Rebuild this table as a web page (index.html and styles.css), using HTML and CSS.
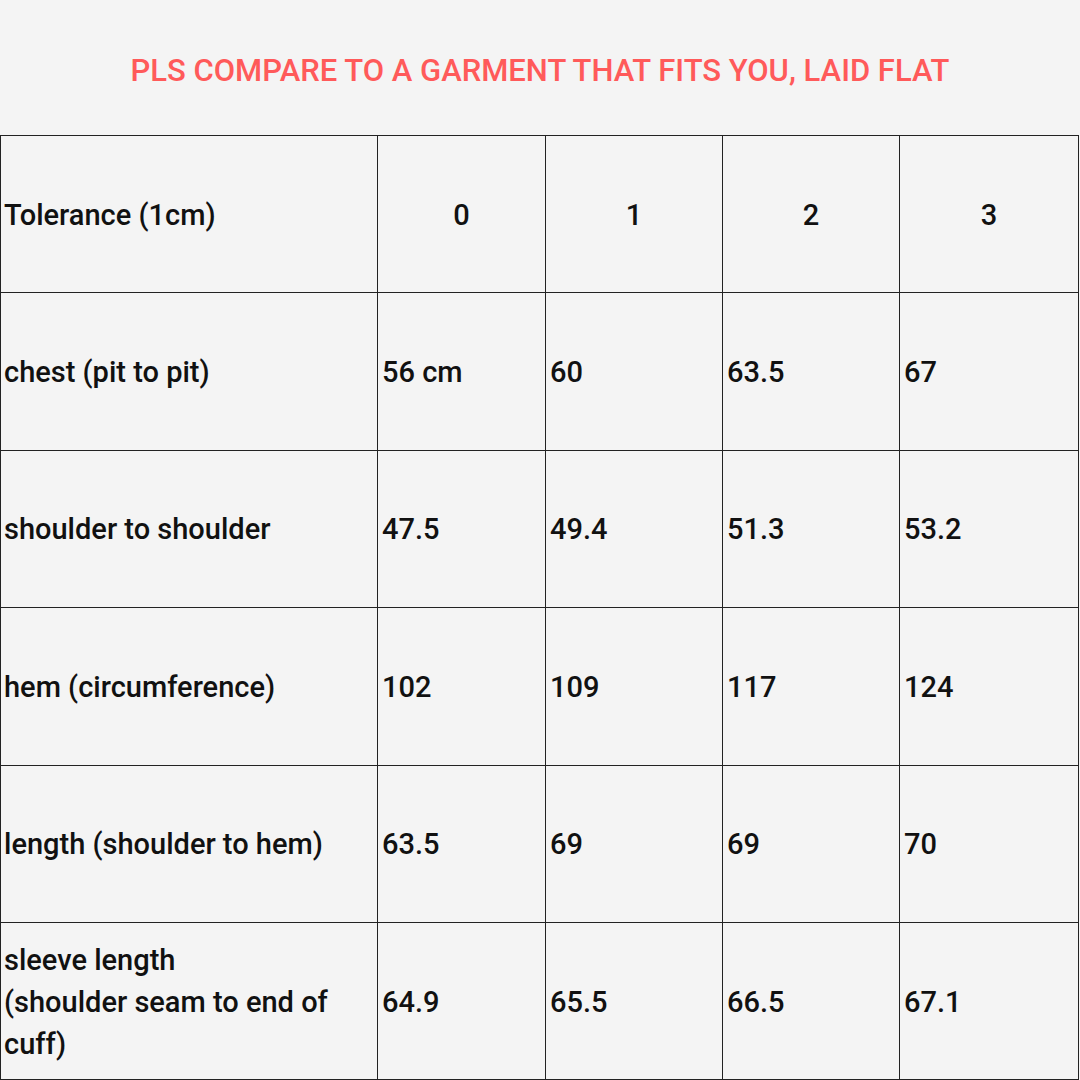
FILE: index.html
```html
<!DOCTYPE html>
<html>
<head>
<meta charset="utf-8">
<link rel="stylesheet" href="styles.css">
</head>
<body>
<div class="page">
  <h1 class="title">PLS COMPARE TO A GARMENT THAT FITS YOU, LAID FLAT</h1>
  <table class="size-table">
    <colgroup>
      <col class="c-label"><col class="c0"><col class="c1"><col class="c2"><col class="c3">
    </colgroup>
    <tr class="head">
      <td class="label">Tolerance (1cm)</td>
      <td class="num">0</td><td class="num">1</td><td class="num">2</td><td class="num">3</td>
    </tr>
    <tr>
      <td class="label">chest (pit to pit)</td>
      <td>56 cm</td><td>60</td><td>63.5</td><td>67</td>
    </tr>
    <tr>
      <td class="label">shoulder to shoulder</td>
      <td>47.5</td><td>49.4</td><td>51.3</td><td>53.2</td>
    </tr>
    <tr>
      <td class="label">hem (circumference)</td>
      <td>102</td><td>109</td><td>117</td><td>124</td>
    </tr>
    <tr>
      <td class="label">length (shoulder to hem)</td>
      <td>63.5</td><td>69</td><td>69</td><td>70</td>
    </tr>
    <tr>
      <td class="label">sleeve length<br>(shoulder seam to end of<br>cuff)</td>
      <td>64.9</td><td>65.5</td><td>66.5</td><td>67.1</td>
    </tr>
  </table>
</div>
</body>
</html>
```
FILE: styles.css
```css
html, body {
  margin: 0;
  padding: 0;
  background: #f4f4f4;
}
.page {
  width: 1080px;
  height: 1080px;
  overflow: hidden;
  font-family: Roboto, "Liberation Sans", sans-serif;
}
.title {
  margin: 0;
  height: 135px;
  display: flex;
  align-items: center;
  justify-content: center;
  color: #ff5a5a;
  font-size: 31px;
  font-weight: 500;
  letter-spacing: 0;
  padding-top: 6px;
  box-sizing: border-box;
}
.size-table {
  border-collapse: collapse;
  table-layout: fixed;
  width: 1078px;
  color: #111;
  font-size: 29px;
  font-weight: 500;
}
.c-label { width: 377px; }
.c0 { width: 168px; }
.c1 { width: 177px; }
.c2 { width: 177px; }
.c3 { width: 179px; }
.size-table td {
  border: 1.5px solid #222;
  height: 157.4px;
  padding: 1px 0 0 4px;
  vertical-align: middle;
  line-height: 42px;
  box-sizing: border-box;
}
.size-table td.label { padding-left: 3px; }
.size-table td.num { text-align: center; padding-left: 0; }
```
